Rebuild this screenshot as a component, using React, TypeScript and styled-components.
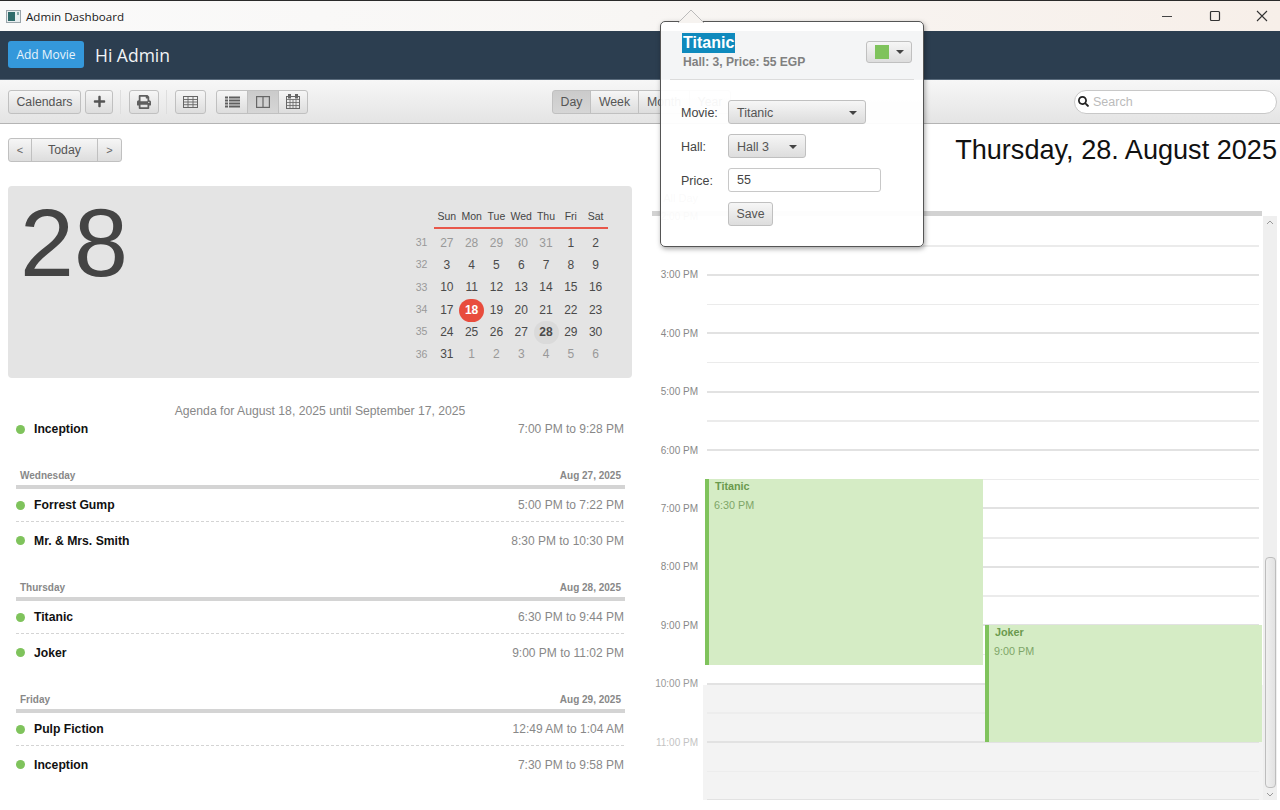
import React from "react";
import styled, { createGlobalStyle } from "styled-components";
import { FaPlus, FaPrint, FaSearch } from "react-icons/fa";

const GlobalStyle = createGlobalStyle`
  html, body {
    margin: 0;
    padding: 0;
    background: #fff;
  }
  * {
    box-sizing: border-box;
  }
`;

const Window = styled.div`
  width: 1280px;
  height: 810px;
  display: flex;
  flex-direction: column;
  overflow: hidden;
  position: relative;
  font-family: "Liberation Sans", Arial, sans-serif;
  color: #333;
`;

const TitleBar = styled.div`
  height: 31px;
  flex: none;
  display: flex;
  align-items: center;
  padding-left: 6px;
  border-top: 1px solid #2a2a2a;
  background: linear-gradient(90deg, #fafafa 0%, #f8f6f4 50%, #f7efe9 100%);
  font-family: "Open Sans", sans-serif;
  font-size: 11.6px;
  color: #1a1a1a;
`;

const AppIcon = styled.svg`
  width: 15px;
  height: 13px;
  margin-right: 5px;
`;

const WindowControls = styled.div`
  margin-left: auto;
  margin-right: -6px;
  display: flex;
  color: #333;
`;

const WindowControl = styled.div`
  width: 47.5px;
  height: 30px;
  display: flex;
  align-items: center;
  justify-content: center;
`;

const Header = styled.div`
  height: 49px;
  flex: none;
  display: flex;
  align-items: center;
  gap: 11px;
  padding-left: 8px;
  background: #2c3e50;
  border-bottom: 1px solid #5a6b7c;
`;

const AddButton = styled.div`
  width: 76px;
  height: 27px;
  margin-bottom: 2px;
  display: flex;
  align-items: center;
  justify-content: center;
  border-radius: 3px;
  background: #3498db;
  color: #e8f4fb;
  font-family: "Open Sans", sans-serif;
  font-size: 12px;
`;

const Greeting = styled.div`
  color: #f2f4f6;
  font-family: "Open Sans", sans-serif;
  font-size: 17.5px;
`;

const Toolbar = styled.div`
  height: 44px;
  flex: none;
  display: flex;
  align-items: center;
  padding: 0 3px 0 8px;
  background: linear-gradient(#f7f7f7, #e4e4e4);
  border-bottom: 1px solid #b4b4b4;
`;

const ToolButton = styled.div<{ $active?: boolean; $width?: number; $gapLeft?: number }>`
  height: 24px;
  width: ${(p) => (p.$width ? `${p.$width}px` : "auto")};
  margin-left: ${(p) => p.$gapLeft ?? 0}px;
  display: flex;
  align-items: center;
  justify-content: center;
  flex: none;
  border: 1px solid #c0c0c0;
  border-radius: 3px;
  background: ${(p) => (p.$active ? "linear-gradient(#cbcbcb, #d6d6d6)" : "linear-gradient(#f6f6f6, #dddddd)")};
  color: #555;
  font-size: 12.3px;
`;

const ButtonGroup = styled.div<{ $gapLeft?: number }>`
  display: flex;
  flex: none;
  margin-left: ${(p) => p.$gapLeft ?? 0}px;

  ${ToolButton} {
    border-radius: 0;
    margin-left: -1px;
  }
  ${ToolButton}:first-child {
    border-radius: 3px 0 0 3px;
    margin-left: 0;
  }
  ${ToolButton}:last-child {
    border-radius: 0 3px 3px 0;
  }
`;

const ToolSeparator = styled.div`
  width: 1px;
  height: 24px;
  margin: 0 8px 0 7px;
  background: #dedede;
`;

const SearchBox = styled.div`
  margin-left: auto;
  width: 203px;
  height: 24px;
  display: flex;
  align-items: center;
  gap: 4px;
  padding-left: 3px;
  border: 1px solid #c8c8c8;
  border-radius: 12px;
  background: #fff;
  color: #222;
  font-size: 12.5px;

  span {
    color: #bbb;
  }
`;

const Content = styled.div`
  flex: 1;
  display: flex;
  min-height: 0;
`;

const LeftPane = styled.div`
  width: 640px;
  flex: none;
  padding: 14px 8px 0;
`;

const NavRow = styled.div`
  display: flex;
  height: 24px;
  margin-bottom: 24px;
`;

const NavArrow = styled(ToolButton)`
  font-size: 11px;
  color: #666;
`;

const SummaryPanel = styled.div`
  height: 192px;
  display: flex;
  justify-content: space-between;
  background: #e4e4e4;
  border-radius: 4px;
  padding: 0 24px 0 12px;
`;

const BigDay = styled.div`
  font-size: 97px;
  line-height: 112px;
  color: #444;
  margin-top: 1px;
`;

const MiniMonth = styled.div`
  padding-top: 20px;
  display: grid;
  grid-template-columns: 24px repeat(7, 24.8px);
  grid-template-rows: 26px;
  grid-auto-rows: 22.3px;
  justify-items: center;
  align-items: center;
  font-size: 12px;
`;

const DayHead = styled.div`
  width: 100%;
  height: 23px;
  align-self: start;
  text-align: center;
  line-height: 20px;
  font-size: 10.5px;
  color: #444;
  border-bottom: 2px solid #e8574a;
`;

const WeekNo = styled.div`
  justify-self: start;
  width: 17px;
  margin-bottom: 2px;
  text-align: right;
  font-size: 10.5px;
  color: #999;
`;

const DayCell = styled.div<{ $muted?: boolean; $today?: boolean; $selected?: boolean }>`
  width: 25px;
  height: 23px;
  line-height: 23px;
  text-align: center;
  border-radius: 12px;
  color: ${(p) => (p.$today ? "#fff" : p.$muted ? "#999" : "#4a4a4a")};
  font-weight: ${(p) => (p.$today || p.$selected ? 700 : 400)};
  background: ${(p) => (p.$today ? "#e84c3d" : p.$selected ? "#dadada" : "transparent")};
`;

const Agenda = styled.div`
  padding: 0 8px;
`;

const AgendaTitle = styled.div`
  margin-top: 25px;
  height: 16px;
  line-height: 16px;
  text-align: center;
  font-size: 12.2px;
  color: #888;
`;

const AgendaGroup = styled.div`
  margin-top: 21px;
`;

const GroupHeader = styled.div`
  height: 17px;
  display: flex;
  justify-content: space-between;
  align-items: center;
  padding: 0 4px 1px;
  border-bottom: 4px solid #d4d4d4;
  margin-right: -1px;
  font-size: 10px;
  font-weight: 700;
  color: #888;
  box-sizing: content-box;
`;

const EntryRow = styled.div`
  height: 36px;
  padding-top: 1px;
  display: flex;
  align-items: center;
`;

const FirstEntry = styled(EntryRow)`
  height: 33px;
  padding-top: 0;
  border-bottom: 1px dashed #d4d4d4;
`;

const LeadEntry = styled(EntryRow)`
  height: 27px;
  padding: 0 0 7px;
`;

const Dot = styled.div`
  width: 9px;
  height: 9px;
  border-radius: 50%;
  background: #7fc35c;
  margin-right: 9px;
`;

const EntryName = styled.div`
  font-size: 12.2px;
  font-weight: 700;
  color: #111;
`;

const EntryTime = styled.div`
  margin-left: auto;
  font-size: 12px;
  color: #888;
`;

const RightPane = styled.div`
  flex: 1;
  display: flex;
  flex-direction: column;
  padding: 9px 3px 10px 12px;
  min-width: 0;
`;

const DateTitle = styled.div`
  height: 34px;
  line-height: 34px;
  text-align: right;
  font-size: 27.1px;
  color: #111;
`;

const AllDayRow = styled.div`
  height: 49px;
  flex: none;
  margin-right: 11px;
  border-bottom: 5px solid #d2d2d2;
  padding-top: 25px;
  width: 610px;
`;

const AllDayLabel = styled.div`
  width: 46px;
  text-align: right;
  font-size: 11px;
  color: #999;
`;

const DayBody = styled.div`
  flex: 1;
  display: flex;
  min-height: 0;
`;

const TimeColumn = styled.div`
  width: 51px;
  flex: none;
  margin-top: -28px;
`;

const TimeLabel = styled.div<{ $fade?: number }>`
  height: 58.4px;
  line-height: 58.4px;
  padding-right: 5px;
  text-align: right;
  font-size: 10px;
  color: #888;
  opacity: ${(p) => p.$fade ?? 1};
`;

const SlotColumn = styled.div`
  width: 560px;
  flex: none;
  position: relative;
  overflow: hidden;
  padding-top: 1.5px;
`;

const Slot = styled.div<{ $dim?: boolean }>`
  height: 29.2px;
  display: flex;
  align-items: flex-end;
  padding: 0 4px;
  background: ${(p) => (p.$dim ? "#f3f3f3" : "transparent")};
`;

const SlotLine = styled.div<{ $hour?: boolean; $dim?: boolean }>`
  flex: 1;
  height: ${(p) => (p.$hour ? "2px" : "1.5px")};
  background: ${(p) => (p.$hour ? "#e2e2e2" : p.$dim ? "#ededed" : "#ebebeb")};
`;

const EventBlock = styled.div<{ $left: number; $top: number; $height: number; $width: number }>`
  position: absolute;
  left: ${(p) => p.$left}px;
  top: ${(p) => p.$top}px;
  width: ${(p) => p.$width}px;
  height: ${(p) => p.$height}px;
  padding: 1px 0 0 5px;
  border-left: 4px solid #7fc35c;
  background: #d5ecc5;
  font-size: 10.8px;
`;

const EventName = styled.div`
  font-weight: 700;
  line-height: 13px;
  margin-left: 1px;
  color: #6a9a4e;
`;

const EventTime = styled.div`
  margin-top: 6px;
  line-height: 13px;
  color: #7ea668;
`;

const ScrollTrack = styled.div`
  width: 14px;
  flex: none;
  display: flex;
  flex-direction: column;
  align-items: center;
  background: #efefef;
`;

const ScrollArrow = styled.div`
  height: 12px;
  flex: none;
  display: flex;
  align-items: center;
`;

const ScrollSpace = styled.div`
  height: 329px;
  flex: none;
`;

const ScrollThumb = styled.div`
  width: 11px;
  height: 231px;
  flex: none;
  border: 1px solid #bdbdbd;
  border-radius: 4px;
  background: linear-gradient(90deg, #f0f0f0, #e2e2e2);
`;

const Popover = styled.div`
  position: absolute;
  left: 660px;
  top: 21px;
  width: 264px;
  height: 226px;
  border: 1px solid #555;
  border-radius: 5px;
  background: rgba(255, 255, 255, 0.95);
  box-shadow: 1px 2px 5px rgba(0, 0, 0, 0.35);
  color: #444;
`;

const PopoverArrow = styled.svg`
  position: absolute;
  left: 15px;
  top: -13px;
  width: 30px;
  height: 14px;
`;

const PopoverHead = styled.div`
  height: 58px;
  margin: 0 9px 0 9px;
  padding: 11px 2px 0 12px;
  display: flex;
  justify-content: space-between;
  border-bottom: 1px solid #dcdcdc;
`;

const PopoverTitle = styled.div`
  display: inline-block;
  height: 20px;
  padding: 0 1px;
  line-height: 20px;
  font-size: 16px;
  font-weight: 700;
  color: #fff;
  background: #0f8abd;
`;

const PopoverSub = styled.div`
  margin-top: 2px;
  padding-left: 1px;
  font-size: 12.1px;
  font-weight: 700;
  color: #808080;
`;

const ColorButton = styled(ToolButton)`
  width: 46px;
  height: 22px;
  margin-top: 8px;
  gap: 7px;
`;

const Swatch = styled.div`
  width: 14px;
  height: 14px;
  background: #7fc35c;
`;

const Caret = styled.div`
  width: 0;
  height: 0;
  border-left: 4px solid transparent;
  border-right: 4px solid transparent;
  border-top: 4px solid #444;
`;

const PopoverForm = styled.div`
  padding: 20px 0 0 20px;
  display: grid;
  grid-template-columns: 47px auto;
  grid-auto-rows: 24px;
  row-gap: 10px;
  align-items: center;
  justify-items: start;
  font-size: 12.5px;
`;

const FieldLabel = styled.span`
  padding-top: 1px;
`;

const Combo = styled(ToolButton)`
  justify-content: space-between;
  padding: 1px 8px 0;
  font-size: 12.5px;
`;

const PriceInput = styled.div`
  width: 153px;
  height: 24px;
  line-height: 23px;
  padding-left: 8px;
  border: 1px solid #c8c8c8;
  border-radius: 3px;
  background: #fff;
`;

// toolbar glyphs, drawn because the icon packs have heavier versions of these
const TableIcon = () => (
  <svg width="15" height="12" viewBox="0 0 15 12" fill="none" stroke="#666">
    <rect x="0.5" y="0.5" width="14" height="11" />
    <path d="M0.5 3.5h14M0.5 6h14M0.5 8.7h14M5 0.5v11M10 0.5v11" strokeWidth="0.9" />
  </svg>
);

const ListIcon = () => (
  <svg width="15" height="12" viewBox="0 0 15 12" fill="#5f5f5f">
    <rect x="0" y="0.5" width="3" height="2" />
    <rect x="4" y="0.5" width="11" height="2" />
    <rect x="0" y="3.5" width="3" height="2" />
    <rect x="4" y="3.5" width="11" height="2" />
    <rect x="0" y="6.5" width="3" height="2" />
    <rect x="4" y="6.5" width="11" height="2" />
    <rect x="0" y="9.5" width="3" height="2" />
    <rect x="4" y="9.5" width="11" height="2" />
  </svg>
);

const ColumnsIcon = () => (
  <svg width="14" height="12" viewBox="0 0 14 12" fill="none" stroke="#666" strokeWidth="1.2">
    <rect x="0.6" y="0.6" width="12.8" height="10.8" />
    <path d="M7 0.6v10.8" />
  </svg>
);

const CalendarIcon = () => (
  <svg width="14" height="15" viewBox="0 0 14 15" fill="none" stroke="#666">
    <rect x="0.5" y="2.5" width="13" height="12" />
    <path d="M0.5 5.5h13M0.5 8.5h13M0.5 11.5h13M4 5.5v9M7 5.5v9M10 5.5v9" strokeWidth="0.8" />
    <rect x="2.5" y="0.5" width="2" height="3.5" fill="#666" />
    <rect x="9.5" y="0.5" width="2" height="3.5" fill="#666" />
  </svg>
);

const weekRows: { no: number; days: { d: number; muted?: boolean }[] }[] = [
  { no: 31, days: [...[27, 28, 29, 30, 31].map((d) => ({ d, muted: true })), { d: 1 }, { d: 2 }] },
  { no: 32, days: [3, 4, 5, 6, 7, 8, 9].map((d) => ({ d })) },
  { no: 33, days: [10, 11, 12, 13, 14, 15, 16].map((d) => ({ d })) },
  { no: 34, days: [17, 18, 19, 20, 21, 22, 23].map((d) => ({ d })) },
  { no: 35, days: [24, 25, 26, 27, 28, 29, 30].map((d) => ({ d })) },
  { no: 36, days: [{ d: 31 }, ...[1, 2, 3, 4, 5, 6].map((d) => ({ d, muted: true }))] },
];

const agendaGroups = [
  {
    day: "Wednesday",
    date: "Aug 27, 2025",
    items: [
      ["Forrest Gump", "5:00 PM to 7:22 PM"],
      ["Mr. & Mrs. Smith", "8:30 PM to 10:30 PM"],
    ],
  },
  {
    day: "Thursday",
    date: "Aug 28, 2025",
    items: [
      ["Titanic", "6:30 PM to 9:44 PM"],
      ["Joker", "9:00 PM to 11:02 PM"],
    ],
  },
  {
    day: "Friday",
    date: "Aug 29, 2025",
    items: [
      ["Pulp Fiction", "12:49 AM to 1:04 AM"],
      ["Inception", "7:30 PM to 9:58 PM"],
    ],
  },
];

const hours = ["2:00 PM", "3:00 PM", "4:00 PM", "5:00 PM", "6:00 PM", "7:00 PM", "8:00 PM", "9:00 PM", "10:00 PM", "11:00 PM"];
const slots = Array.from({ length: 20 }, (_, i) => i);

const App = () => {
  return (
    <Window>
      <GlobalStyle />
      <TitleBar>
        <AppIcon viewBox="0 0 15 13">
          <rect x="0.5" y="0.5" width="14" height="12" fill="#e8eef0" stroke="#9aa5ab" />
          <rect x="2" y="2" width="7" height="9" fill="#2f6b6b" />
          <rect x="11" y="2" width="2" height="3" fill="#8aa" />
        </AppIcon>
        Admin Dashboard
        <WindowControls>
          <WindowControl>
            <svg width="12" height="12" viewBox="0 0 12 12"><path d="M1 6.5h10" stroke="#444" strokeWidth="1" /></svg>
          </WindowControl>
          <WindowControl>
            <svg width="12" height="12" viewBox="0 0 12 12"><rect x="1.5" y="1.5" width="9" height="9" rx="1" fill="none" stroke="#333" strokeWidth="1.2" /></svg>
          </WindowControl>
          <WindowControl>
            <svg width="12" height="12" viewBox="0 0 12 12"><path d="M1 1l10 10M11 1L1 11" stroke="#333" strokeWidth="1.1" /></svg>
          </WindowControl>
        </WindowControls>
      </TitleBar>
      <Header>
        <AddButton>Add Movie</AddButton>
        <Greeting>Hi Admin</Greeting>
      </Header>
      <Toolbar>
        <ToolButton $width={73}>Calendars</ToolButton>
        <ToolButton $width={28} $gapLeft={4}><FaPlus size={13} color="#555" /></ToolButton>
        <ToolSeparator />
        <ToolButton $width={30}><FaPrint size={14} color="#5f5f5f" /></ToolButton>
        <ToolSeparator />
        <ToolButton $width={31}><TableIcon /></ToolButton>
        <ButtonGroup $gapLeft={10}>
          <ToolButton $width={32}><ListIcon /></ToolButton>
          <ToolButton $width={32} $active><ColumnsIcon /></ToolButton>
          <ToolButton $width={30}><CalendarIcon /></ToolButton>
        </ButtonGroup>
        <ButtonGroup $gapLeft={244}>
          <ToolButton $width={39} $active>Day</ToolButton>
          <ToolButton $width={49}>Week</ToolButton>
          <ToolButton $width={52}>Month</ToolButton>
          <ToolButton $width={42}>Year</ToolButton>
        </ButtonGroup>
        <SearchBox>
          <FaSearch size={11} />
          <span>Search</span>
        </SearchBox>
      </Toolbar>
      <Content>
        <LeftPane>
          <NavRow>
            <ButtonGroup>
              <NavArrow $width={24}>&lt;</NavArrow>
              <ToolButton $width={67}>Today</ToolButton>
              <NavArrow $width={25}>&gt;</NavArrow>
            </ButtonGroup>
          </NavRow>
          <SummaryPanel>
            <BigDay>28</BigDay>
            <MiniMonth>
              <div />
              {["Sun", "Mon", "Tue", "Wed", "Thu", "Fri", "Sat"].map((d) => (
                <DayHead key={d}>{d}</DayHead>
              ))}
              {weekRows.map((w) => (
                <React.Fragment key={w.no}>
                  <WeekNo>{w.no}</WeekNo>
                  {w.days.map((c, i) => (
                    <DayCell key={i} $muted={c.muted} $today={w.no === 34 && c.d === 18} $selected={w.no === 35 && c.d === 28}>
                      {c.d}
                    </DayCell>
                  ))}
                </React.Fragment>
              ))}
            </MiniMonth>
          </SummaryPanel>
          <Agenda>
            <AgendaTitle>Agenda for August 18, 2025 until September 17, 2025</AgendaTitle>
            <LeadEntry>
              <Dot />
              <EntryName>Inception</EntryName>
              <EntryTime>7:00 PM to 9:28 PM</EntryTime>
            </LeadEntry>
            {agendaGroups.map((g) => (
              <AgendaGroup key={g.day}>
                <GroupHeader>
                  <span>{g.day}</span>
                  <span>{g.date}</span>
                </GroupHeader>
                <FirstEntry>
                  <Dot />
                  <EntryName>{g.items[0][0]}</EntryName>
                  <EntryTime>{g.items[0][1]}</EntryTime>
                </FirstEntry>
                <EntryRow>
                  <Dot />
                  <EntryName>{g.items[1][0]}</EntryName>
                  <EntryTime>{g.items[1][1]}</EntryTime>
                </EntryRow>
              </AgendaGroup>
            ))}
          </Agenda>
        </LeftPane>
        <RightPane>
          <DateTitle>Thursday, 28. August 2025</DateTitle>
          <AllDayRow>
            <AllDayLabel>All Day</AllDayLabel>
          </AllDayRow>
          <DayBody>
            <TimeColumn>
              {hours.map((h, i) => (
                <TimeLabel key={h} $fade={i === 9 ? 0.5 : i === 8 ? 0.85 : 1}>{h}</TimeLabel>
              ))}
            </TimeColumn>
            <SlotColumn>
              {slots.map((i) => (
                <Slot key={i} $dim={i >= 16}>
                  <SlotLine $hour={i % 2 === 1} $dim={i >= 16} />
                </Slot>
              ))}
              <EventBlock $left={2} $top={263} $height={186} $width={278}>
                <EventName>Titanic</EventName>
                <EventTime>6:30 PM</EventTime>
              </EventBlock>
              <EventBlock $left={282} $top={409} $height={117} $width={277}>
                <EventName>Joker</EventName>
                <EventTime>9:00 PM</EventTime>
              </EventBlock>
            </SlotColumn>
            <ScrollTrack>
              <ScrollArrow>
                <svg width="8" height="5" viewBox="0 0 8 5"><path d="M1 4l3-3 3 3" fill="none" stroke="#999" /></svg>
              </ScrollArrow>
              <ScrollSpace />
              <ScrollThumb />
              <ScrollArrow>
                <svg width="8" height="5" viewBox="0 0 8 5"><path d="M1 1l3 3 3-3" fill="none" stroke="#999" /></svg>
              </ScrollArrow>
            </ScrollTrack>
          </DayBody>
        </RightPane>
      </Content>
      <Popover>
        <PopoverArrow viewBox="0 0 30 14">
          <path d="M2 14L15 1l13 13" fill="#f6f3f0" stroke="#bbb" strokeWidth="1" />
        </PopoverArrow>
        <PopoverHead>
          <div>
            <PopoverTitle>Titanic</PopoverTitle>
            <PopoverSub>Hall: 3, Price: 55 EGP</PopoverSub>
          </div>
          <ColorButton>
            <Swatch />
            <Caret />
          </ColorButton>
        </PopoverHead>
        <PopoverForm>
          <FieldLabel>Movie:</FieldLabel>
          <Combo $width={138}>Titanic<Caret /></Combo>
          <FieldLabel>Hall:</FieldLabel>
          <Combo $width={78}>Hall 3<Caret /></Combo>
          <FieldLabel>Price:</FieldLabel>
          <PriceInput>55</PriceInput>
          <span />
          <ToolButton $width={45}>Save</ToolButton>
        </PopoverForm>
      </Popover>
    </Window>
  );
};

export default App;
